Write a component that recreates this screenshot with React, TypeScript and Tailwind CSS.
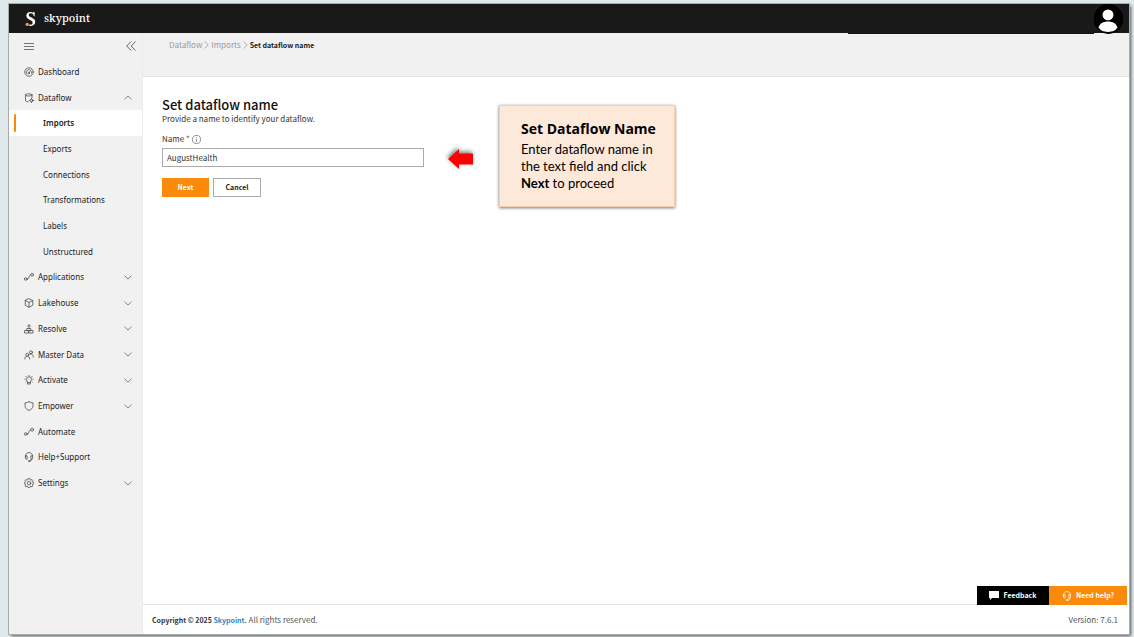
import React, { useState } from "react";
import { clsx } from "clsx";

interface NavItem {
    label: string;
    icon?: React.ReactNode;
    arrow?: "up" | "down";
    active?: boolean;
}

function Icon({ children, className = "w-[10px] h-[10px]" }: { children: React.ReactNode; className?: string }) {
    return (
        <svg
            viewBox="0 0 20 20"
            className={clsx("shrink-0", className)}
            fill="none"
            stroke="currentColor"
            strokeWidth="1.5"
            strokeLinecap="round"
            strokeLinejoin="round"
            aria-hidden="true"
        >
            {children}
        </svg>
    );
}

const flowIcon = (
    <Icon>
        <circle cx="3.5" cy="14" r="2.6" />
        <circle cx="16.2" cy="5.5" r="2.8" />
        <path d="M6.2 14.5c2.5 0 3-2 3.5-4s1.5-4.500 3.5-4.500" />
    </Icon>
);

const headsetIcon = (
    <Icon>
        <path d="M2.800 8.500C2.800 4 6 1.200 10 1.200S17.200 4 17.200 8.500V12c0 1.500-1 2.500-2.500 2.500h-1V7.800h3.300" />
        <path d="M2.800 8.500V12c0 1.500 1 2.500 2.500 2.500h1V7.800H3M15.500 14.500c0 2.500-1.300 3.500-3.500 3.500" />
        <path d="M9.500 18h2" strokeWidth="2.800" />
    </Icon>
);

const navItems: NavItem[] = [
    {
        label: "Dashboard",
        icon: (
            <Icon>
                <circle cx="10" cy="10" r="8.5" />
                <circle cx="9.5" cy="12.500" r="1.5" />
                <path d="M10.5 11.200 13.500 6.500M5 12.500a5.500 5.500 0 0 1 5.500-7.500M15.200 9.500v3" />
            </Icon>
        ),
    },
    {
        label: "Dataflow",
        arrow: "up",
        icon: (
            <Icon>
                <ellipse cx="9.5" cy="3.8" rx="6.5" ry="2.3" />
                <path d="M3 4v11c0 1.500 2 2.500 5.500 2.500M16 4v5" />
                <circle cx="15" cy="15" r="2.8" />
                <path d="M15 11v1.200M15 17.800V19M11 15h1.200M17.800 15H19" />
            </Icon>
        ),
    },
    { label: "Imports", active: true },
    { label: "Exports" },
    { label: "Connections" },
    { label: "Transformations" },
    { label: "Labels" },
    { label: "Unstructured" },
    { label: "Applications", arrow: "down", icon: flowIcon },
    {
        label: "Lakehouse",
        arrow: "down",
        icon: (
            <Icon>
                <path d="M10 1.500 17.500 5v9.500L10 18.500l-7.500-4V5zM2.500 5 10 8.800 17.500 5M10 8.800v9.700" />
            </Icon>
        ),
    },
    {
        label: "Resolve",
        arrow: "down",
        icon: (
            <Icon>
                <path d="M10 9V2M7 4.500 10 1.500l3 3M6.500 9h7v4h-7zM2 13h7v5H2zM11 13h7v5h-7z" />
            </Icon>
        ),
    },
    {
        label: "Master Data",
        arrow: "down",
        icon: (
            <Icon>
                <circle cx="6.5" cy="9.5" r="3" />
                <path d="M1.500 18c0-3.500 2-5.500 5-5.500s5 2 5 5.500" />
                <circle cx="14" cy="4.5" r="3" />
                <path d="M11.500 8.800c4-2.500 7 .5 7 5.200" />
            </Icon>
        ),
    },
    {
        label: "Activate",
        arrow: "down",
        icon: (
            <Icon>
                <path d="M7.500 14.500c0-2-2.500-3-2.500-6a5 5 0 0 1 10 0c0 3-2.500 4-2.500 6v3.500h-5zM7.500 15h5" />
                <path d="M10 .8v.5M3.800 2.800l.6.6M16.200 2.800l-.6.6M1.500 8.500h.8M17.700 8.500h.8M3.500 14l.6-.5M16.500 14l-.6-.5" />
            </Icon>
        ),
    },
    {
        label: "Empower",
        arrow: "down",
        icon: (
            <Icon>
                <path d="M10 1.200c2.500 2 5 2.500 8 2.500v5.500c0 5-3.500 8-8 9.600-4.500-1.600-8-4.600-8-9.600V3.700c3 0 5.500-.5 8-2.500z" />
            </Icon>
        ),
    },
    { label: "Automate", icon: flowIcon },
    { label: "Help+Support", icon: headsetIcon },
    {
        label: "Settings",
        arrow: "down",
        icon: (
            <Icon>
                <path d="m8.200 1.200-.5 2.200-2 .9-2-1.200-1.900 2 1.200 2-.6 1.700-1.700.6v2l1.900.7.7 1.900-1.200 1.900 1.800 1.900 2-1.200 1.800.8.600 2h3.200l.6-2 1.900-.8 1.900 1.100 1.900-1.900-1.200-1.900.7-1.800 1.900-.6V9.400l-1.900-.6-.7-1.800 1.200-2-1.900-1.900-1.900 1.200-2-.9-.5-2.200z" />
                <circle cx="10" cy="10.4" r="3.5" />
            </Icon>
        ),
    },
];

function Chevron({ className }: { className?: string }) {
    return (
        <svg viewBox="0 0 10 6" className={clsx("w-2 h-[5px] shrink-0", className)} fill="none" stroke="currentColor" aria-hidden="true">
            <path d="M.6.7 5 5 9.400.7" />
        </svg>
    );
}

function Header() {
    return (
        <header className="relative h-[29px] shrink-0 bg-[#191919] flex items-center justify-between pl-4 pr-[6px]">
            <a href="#" className="flex items-center gap-2 text-white">
                <svg viewBox="0 0 20 28" className="w-[11px] h-4" fill="none" aria-hidden="true">
                    <path d="M17.500 2v7h-1.300C15.500 5.500 13.500 3.600 10.500 3.600c-2.400 0-3.700 1.200-3.700 3 0 2.200 1.800 3.100 5 4.700 4.400 2.200 6.800 4.200 6.800 7.900 0 4.400-3.600 7.400-8.300 7.400-1 0-1.800-.1-2.600-.3v-2.200c3.800.8 6.200-.6 6.200-3.400 0-2.400-1.900-3.600-5.400-5.300C5 13.500 2.400 11.500 2.400 8c0-4 3.300-6.800 7.500-6.800 1.800 0 3.300.5 4.600 1.400L16 1z" fill="#fff" />
                    <circle cx="4" cy="23.8" r="3" fill="#f9a11b" />
                </svg>
                <span className="font-['Noto_Serif','Liberation_Serif',serif] font-medium text-[11px]">skypoint</span>
            </a>
            <div className="absolute right-[35px] top-full w-[246px] h-px bg-[#191019]" />
            <button aria-label="Account" className="relative w-[29px] h-[29px]">
                <svg viewBox="0 0 28 29" className="w-full h-[30px]" aria-hidden="true">
                    <circle cx="14" cy="14.5" r="14.5" fill="#000" />
                    <circle cx="13.5" cy="10.5" r="5.3" fill="#fff" />
                    <path d="M4.500 22.500c1-3.500 4.500-5.500 9-5.500s8 2 9 5.500c-1 3-4.500 4.500-9 4.500s-8-1.500-9-4.500z" fill="#fff" />
                </svg>
            </button>
        </header>
    );
}

function Sidebar() {
    return (
        <nav className="w-[134px] shrink-0 bg-[#f1f1f1] border-r border-[#ebebeb] font-['Noto_Sans',sans-serif] text-[8px] text-[#222]">
            <div className="h-[26px] flex items-center justify-between pl-[15px] pr-[6px] text-[#555]">
                <button aria-label="Menu">
                    <svg viewBox="0 0 10 8" className="w-[10px] h-2" stroke="currentColor" strokeWidth="0.8" aria-hidden="true">
                        <path d="M0 1.500h10M0 4.500h10M0 7.500h10" />
                    </svg>
                </button>
                <button aria-label="Collapse sidebar">
                    <svg viewBox="0 0 10 10" className="w-[10px] h-[10px]" fill="none" stroke="currentColor" strokeWidth="0.9" aria-hidden="true">
                        <path d="M5 .5.7 5 5 9.500M9.500.5 5.200 5l4.300 4.500" />
                    </svg>
                </button>
            </div>
            <ul className="h-[437px] grid auto-rows-fr">
                {navItems.map((item) => (
                    <li key={item.label} className={clsx("flex", item.active && "bg-white font-semibold")}>
                        {item.active && <span className="w-[2px] h-[18px] ml-[5px] -mr-[7px] self-center rounded-sm bg-[#f98a00]" />}
                        <a
                            href="#"
                            className={clsx("flex-1 flex items-center gap-1 pr-[10px]", item.icon ? "pl-[15px]" : "pl-[34px]")}
                        >
                            {item.icon && <span className="text-[#444]">{item.icon}</span>}
                            <span className="flex-1">{item.label}</span>
                            {item.arrow && <Chevron className={clsx("text-[#666]", item.arrow === "up" && "rotate-180")} />}
                        </a>
                    </li>
                ))}
            </ul>
        </nav>
    );
}

function Separator() {
    return (
        <svg viewBox="0 0 5 8" className="w-[5px] h-2" fill="none" stroke="#999" strokeWidth="0.8" aria-hidden="true">
            <path d="M.7.5 4.200 4 .7 7.500" />
        </svg>
    );
}

export default function App() {
    const [name, setName] = useState("AugustHealth");

    return (
        <div className="min-h-screen flex flex-col bg-[#dfe8ea] pt-1 pr-[5px] pb-[3px] pl-[9px] font-['Noto_Sans_CJK_SC',sans-serif] text-[8px] text-[#333]">
            <div className="relative flex-1 flex flex-col bg-white outline outline-[#aaa] shadow-[2px_2px_3px_#555]">
                <Header />
                <div className="flex-1 flex">
                    <Sidebar />
                    <div className="flex-1 min-w-0 flex flex-col">
                        <div className="h-11 bg-[#f1f1f1] border-b border-[#e2e2e2] pl-[26px] pt-[6px]">
                            <nav aria-label="Breadcrumb" className="flex items-center gap-[2px] leading-3 text-[#999]">
                                <a href="#">Dataflow</a>
                                <Separator />
                                <a href="#">Imports</a>
                                <Separator />
                                <span className="text-[7px] font-bold text-[#222]">Set dataflow name</span>
                            </nav>
                        </div>

                        <main className="flex-1 pl-[19px] pt-[19px]">
                            <h1 className="text-[13px] leading-[17px] font-medium text-[#111]">Set dataflow name</h1>
                            <p className="leading-3">Provide a name to identify your dataflow.</p>
                            <div className="mt-2 flex items-center gap-[2px] leading-3">
                                <label htmlFor="dataflow-name">
                                    Name <span className="text-[#a4262c]">*</span>
                                </label>
                                <svg viewBox="0 0 10 10" className="w-[9px] h-[9px]" fill="none" stroke="#666" strokeWidth="0.8" aria-hidden="true">
                                    <circle cx="5" cy="5" r="4.5" />
                                    <path d="M5 4.300v3.200M5 2.400v1" />
                                </svg>
                            </div>
                            <input
                                id="dataflow-name"
                                type="text"
                                value={name}
                                onChange={(e) => setName(e.target.value)}
                                className="block mt-[3px] w-[262px] h-[19px] px-1 border border-[#aaa] bg-white outline-none"
                            />
                            <div className="mt-[11px] flex gap-1 text-[7px] font-bold">
                                <button className="w-[47px] h-[19px] bg-[#f98a0a] text-white">Next</button>
                                <button className="w-12 h-[19px] border border-[#aaa] bg-white text-[#222]">Cancel</button>
                            </div>
                        </main>

                        <div className="relative -mb-px flex justify-end pr-[2px] text-[7px] font-bold text-white">
                            <button className="w-[72px] h-[19px] bg-black flex items-center justify-center gap-1">
                                <svg viewBox="0 0 10 9" className="w-[10px] h-[9px]" fill="#fff" aria-hidden="true">
                                    <path d="M0 0h10v7H3L1 9V7H0z" />
                                </svg>
                                Feedback
                            </button>
                            <button className="w-[78px] h-[19px] bg-[#f98a0a] flex items-center justify-center gap-1">
                                {headsetIcon}
                                Need help?
                            </button>
                        </div>
                        <footer className="h-[30px] border-t border-[#e2e2ea] flex items-center justify-between pl-[9px] pr-[11px] text-[#555]">
                            <p>
                                <span className="text-[7px] font-bold text-[#333]">
                                    Copyright © 2025 <a href="#" className="text-[#2d87bd]">Skypoint</a>.
                                </span>{" "}
                                All rights reserved.
                            </p>
                            <span>Version: 7.6.1</span>
                        </footer>
                    </div>
                </div>

                {/* Walkthrough arrow and note */}
                <svg viewBox="0 0 26 20" className="absolute left-[439px] top-[145px] w-[26px] h-5 drop-shadow-[-1px_-2px_2px_rgba(0,0,0,0.5)]" aria-hidden="true">
                    <path d="M0 10 11 0v4.500h14v11H11V20z" fill="#f00" />
                </svg>
                <aside className="absolute left-[490px] top-[101px] w-[176px] h-[102px] pl-[21px] pt-[14px] bg-[#fde9d9] border border-[#f8cfa8] shadow-[0_1px_3px_#777] font-['Lato',sans-serif] text-[13px] leading-[17px] text-black">
                    <h2 className="mb-1 font-['Open_Sans',sans-serif] text-[14px] leading-[17px] font-bold">Set Dataflow Name</h2>
                    <p>
                        Enter dataflow name in
                        <br />
                        the text field and click
                        <br />
                        <b>Next</b> to proceed
                    </p>
                </aside>
            </div>
        </div>
    );
}
